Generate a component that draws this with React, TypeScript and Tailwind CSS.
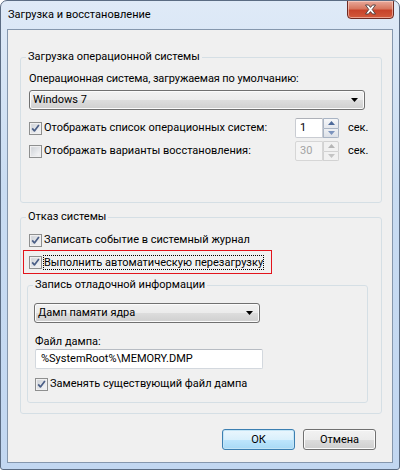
import React from "react";

const font = { fontFamily: "Roboto, 'Noto Sans', sans-serif" };

function CheckBox({ checked = true }: { checked?: boolean }) {
  return (
    <svg width="13" height="13" viewBox="0 0 13 13" className="shrink-0 block">
      <defs>
        <linearGradient id="cbFill" x1="0" y1="0" x2="1" y2="1">
          <stop offset="0" stopColor="#cdd1d6" />
          <stop offset="1" stopColor="#f8f8f9" />
        </linearGradient>
      </defs>
      <rect x="0.5" y="0.5" width="12" height="12" fill="#f4f4f4" stroke="#8e8f8f" />
      <rect x="2" y="2" width="9" height="9" fill="url(#cbFill)" stroke="#e3e4e6" strokeWidth="0.6" />
      {checked && (
        <path d="M3.2 6.4 L5.4 8.9 L9.9 2.9" fill="none" stroke="#4a5e86" strokeWidth="1.7" strokeLinejoin="round" />
      )}
    </svg>
  );
}

function ComboBox({ value, width }: { value: string; width: string }) {
  return (
    <div
      className={`${width} h-[20px] flex items-center justify-between rounded-[3px] border border-[#707070] bg-[linear-gradient(#f2f2f2_0%,#ebebeb_50%,#dddddd_51%,#cfcfcf_100%)] pl-[3px] pr-[6px] shadow-[inset_0_0_0_1px_#fbfbfb]`}
    >
      <span className="text-[11px] leading-[16px] text-black">{value}</span>
      <svg width="7" height="4" viewBox="0 0 7 4" className="block">
        <path d="M0 0 H7 L3.5 4 Z" fill="#000" />
      </svg>
    </div>
  );
}

function SpinBox({ value, disabled = false }: { value: string; disabled?: boolean }) {
  const arrow = disabled ? "#b5b5b5" : "#4d6a9a";
  const arrowLow = disabled ? "#c4c4c4" : "#7b93bd";
  return (
    <div className="flex h-[20px] w-[44px] shrink-0">
      <div
        className={`flex-1 flex items-center pl-[4px] border rounded-l-[2px] ${
          disabled ? "border-[#d6d6d6] bg-[#f4f4f4] text-[#a3a3a3]" : "border-[#c9ccd2] border-t-[#aeb1b8] bg-white text-black"
        }`}
      >
        <span className="text-[11px] leading-[16px]">{value}</span>
      </div>
      <div className="w-[16px] flex flex-col">
        <div
          className={`flex-1 flex items-center justify-center border rounded-tr-[2px] ${
            disabled ? "border-[#d2d2d2] bg-[#f1f1f1]" : "border-[#a9b4c4] bg-[linear-gradient(#f6f7f9,#e4e7ec)]"
          }`}
        >
          <svg width="7" height="4" viewBox="0 0 7 4" className="block">
            <path d="M0 4 H7 L3.5 0 Z" fill={arrow} />
          </svg>
        </div>
        <div
          className={`flex-1 flex items-center justify-center border border-t-0 rounded-br-[2px] ${
            disabled ? "border-[#d2d2d2] bg-[#f1f1f1]" : "border-[#a9b4c4] bg-[linear-gradient(#eef0f3,#dde1e7)]"
          }`}
        >
          <svg width="7" height="4" viewBox="0 0 7 4" className="block">
            <path d="M0 0 H7 L3.5 4 Z" fill={arrowLow} />
          </svg>
        </div>
      </div>
    </div>
  );
}

function GroupBox({
  title,
  height,
  className = "",
  children,
}: {
  title: string;
  height: string;
  className?: string;
  children: React.ReactNode;
}) {
  return (
    <fieldset className={`${height} border border-[#d5dfe5] rounded-[3px] p-0 m-0 min-w-0 ${className}`}>
      <legend className="ml-[5px] px-[2px] text-[11px] leading-[16px] text-black">{title}</legend>
      {children}
    </fieldset>
  );
}

function Button({ label, isDefault = false }: { label: string; isDefault?: boolean }) {
  return (
    <button
      className={`w-[73px] h-[21px] rounded-[3px] border text-[11px] leading-[16px] text-black flex items-center justify-center ${
        isDefault
          ? "border-[#3c7fb1] bg-[linear-gradient(#eaf6fd_0%,#d9f0fc_50%,#bee6fd_51%,#a7d9f5_100%)] shadow-[inset_0_0_0_1px_#c4e5f6]"
          : "border-[#707070] bg-[linear-gradient(#f2f2f2_0%,#ebebeb_50%,#dddddd_51%,#cfcfcf_100%)] shadow-[inset_0_0_0_1px_#fbfbfb]"
      }`}
    >
      {label}
    </button>
  );
}

export default function App() {
  return (
    <div className="w-[400px] h-[470px] bg-white" style={font}>
      <div className="w-[400px] h-[470px] flex flex-col border border-[#5b6c83] rounded-t-[7px] rounded-b-[3px] bg-[linear-gradient(#dfeaf7,#c9dcf2_40%,#c2d7f1)] overflow-hidden">
        {/* caption bar */}
        <div className="h-[28px] flex items-start justify-between pl-[7px] pr-[5px]">
          <span className="h-[28px] flex items-center text-[11px] leading-[16px] text-black">
            Загрузка и восстановление
          </span>
          <div className="w-[47px] h-[19px] mt-[-1px] flex items-center justify-center rounded-b-[4px] border border-[#6e2a22] bg-[linear-gradient(#e9a99b_0%,#d7775f_45%,#c7432a_55%,#d25a3c_100%)] shadow-[inset_0_0_0_1px_rgba(255,220,210,0.55)]">
            <svg width="13" height="11" viewBox="0 0 13 11" className="block">
              <path
                d="M1.5 1 H4.5 L6.5 3.4 L8.5 1 H11.5 L8.2 5.5 L11.5 10 H8.5 L6.5 7.6 L4.5 10 H1.5 L4.8 5.5 Z"
                fill="#fff"
                stroke="#4a3a3a"
                strokeWidth="0.9"
                strokeLinejoin="round"
              />
            </svg>
          </div>
        </div>

        {/* frame around the client area */}
        <div className="flex-1 flex flex-col px-[6px] pb-[6px]">
          <div className="flex-1 flex flex-col border border-[#8597ad] bg-[#f0f0f0] pl-[12px] pr-[10px] pt-[19px]">
            <GroupBox title="Загрузка операционной системы" height="h-[154px]">
              <div className="flex flex-col pl-[8px] pr-[15px]">
                <p className="mt-[6px] text-[11px] leading-[16px] tracking-[-0.1px]">Операционная система, загружаемая по умолчанию:</p>
                <div className="mt-[3px]">
                  <ComboBox value="Windows 7" width="w-[336px]" />
                </div>
                <div className="mt-[8px] h-[20px] flex items-center mr-[-9px]">
                  <CheckBox />
                  <span className="ml-[2px] flex-1 text-[11px] leading-[16px]">Отображать список операционных систем:</span>
                  <SpinBox value="1" />
                  <span className="ml-[9px] w-[27px] text-[11px] leading-[16px]">сек.</span>
                </div>
                <div className="mt-[3px] h-[20px] flex items-center mr-[-9px]">
                  <CheckBox checked={false} />
                  <span className="ml-[2px] flex-1 text-[11px] leading-[16px]">Отображать варианты восстановления:</span>
                  <SpinBox value="30" disabled />
                  <span className="ml-[9px] w-[27px] text-[11px] leading-[16px]">сек.</span>
                </div>
              </div>
            </GroupBox>

            <GroupBox title="Отказ системы" height="h-[205px]" className="mt-[6px]">
              <div className="flex flex-col pl-[6px] pr-[13px]">
                <div className="mt-[7px] h-[16px] flex items-center pl-[2px]">
                  <CheckBox />
                  <span className="ml-[2px] text-[11px] leading-[16px]">Записать событие в системный журнал</span>
                </div>
                <div className="mt-[2px] ml-[-4px] w-[249px] h-[24px] flex items-center pl-[5px] border border-[#e3141c]">
                  <CheckBox />
                  <span className="ml-[1px] h-[15px] flex items-center whitespace-nowrap border border-dotted border-black text-[11px] leading-[13px]">
                    Выполнить автоматическую перезагрузку
                  </span>
                </div>

                <GroupBox title="Запись отладочной информации" height="h-[126px]" className="mt-[3px]">
                  <div className="flex flex-col pl-[6px]">
                    <div className="mt-[10px]">
                      <ComboBox value="Дамп памяти ядра" width="w-[226px]" />
                    </div>
                    <p className="mt-[12px] pl-[1px] text-[11px] leading-[14px]">Файл дампа:</p>
                    <div className="ml-[1px] w-[228px] h-[20px] flex items-center pl-[5px] bg-white border border-[#d3d8de] border-t-[#b7bcc3] rounded-[2px]">
                      <span className="text-[11px] leading-[16px]">%SystemRoot%\MEMORY.DMP</span>
                    </div>
                    <div className="mt-[7px] h-[16px] flex items-center pl-[1px]">
                      <CheckBox />
                      <span className="ml-[2px] text-[11px] leading-[16px]">Заменять существующий файл дампа</span>
                    </div>
                  </div>
                </GroupBox>
              </div>
            </GroupBox>

            <div className="mt-[15px] flex justify-end gap-[8px] mr-[6px]">
              <Button label="ОК" isDefault />
              <Button label="Отмена" />
            </div>
          </div>
        </div>
      </div>
    </div>
  );
}
